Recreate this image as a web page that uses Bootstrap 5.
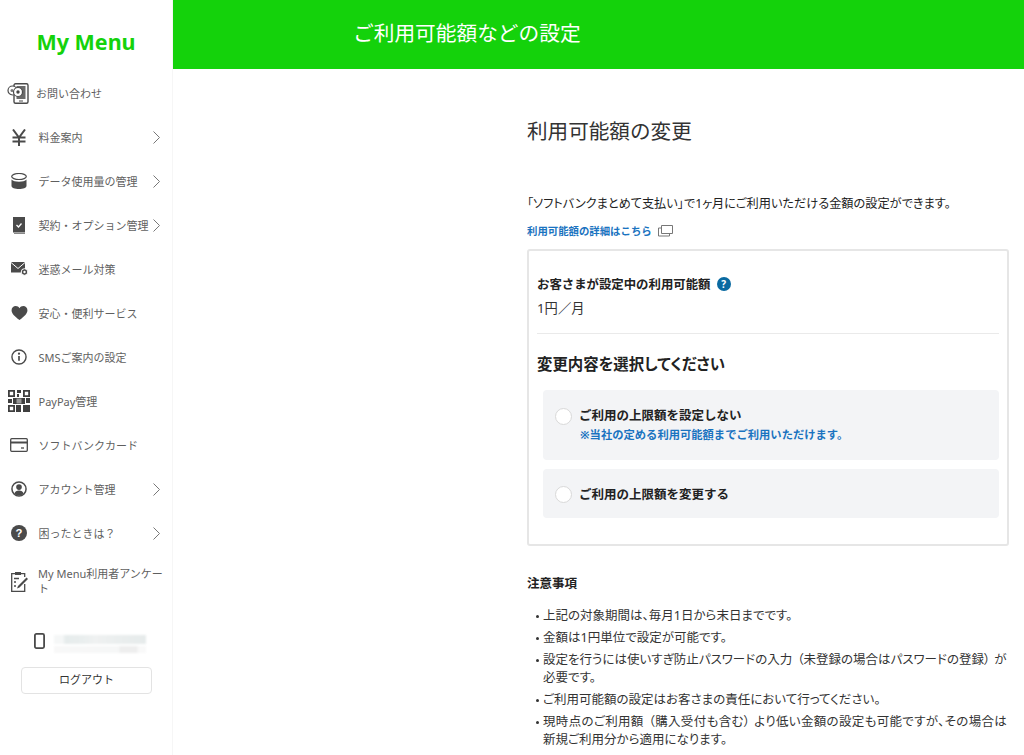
<!DOCTYPE html>
<html lang="ja">
<head>
  <meta charset="UTF-8" />
  <meta name="viewport" content="width=device-width, initial-scale=1" />
  <title>ご利用可能額などの設定</title>
  <link href="https://cdn.jsdelivr.net/npm/bootstrap@5.3.3/dist/css/bootstrap.min.css" rel="stylesheet" />
  <style>
    html, body {
      height: 755px;
      overflow: hidden;
    }

    body {
      font-family: "Noto Sans", "Noto Sans CJK JP", sans-serif;
      color: #222;
      background: #fff;
    }

    .page-wrap {
      height: 755px;
    }

    .side-menu {
      width: 173px;
      flex: 0 0 173px;
      border-right: 1px solid #f6f6f6;
      background: #fff;
    }

    .side-title {
      height: 71px;
      padding-top: 26px;
      font-weight: 700;
      font-size: 21.5px;
      line-height: 32px;
      color: #14d20b;
      text-align: center;
    }

    .menu-row {
      height: 44px;
      color: #5f5f5f;
      font-size: 11px;
      line-height: 15px;
      text-decoration: none;
    }

    .menu-row.menu-tall {
      height: 52px;
    }

    .menu-icon {
      width: 38.5px;
      flex: 0 0 38.5px;
    }

    .menu-icon svg {
      display: block;
      margin: 0 auto;
    }

    .menu-first .menu-icon {
      width: 36px;
      flex-basis: 36px;
    }

    .menu-tall .menu-icon {
      width: 38px;
      flex-basis: 38px;
    }

    .menu-label {
      flex: 1 1 auto;
      white-space: nowrap;
    }

    .menu-label.menu-wrap {
      white-space: normal;
      padding-right: 6px;
    }

    .menu-arrow {
      flex: 0 0 auto;
      margin-right: 12px;
    }

    .phone-row {
      margin-top: 26px;
      height: 20px;
      padding-left: 34px;
    }

    .blur-num {
      margin: 2px 0 0 9px;
      width: 92px;
    }

    .blur-num span {
      display: block;
      filter: blur(1px);
    }

    .blur-a {
      height: 9px;
      background: linear-gradient(to right, #f5f7f7 0, #f5f7f7 10%, #e6ecec 12%, #e9eeee 30%, #eff1f1 45%, #eaeeee 70%, #e6ebeb 100%);
    }

    .blur-b {
      height: 7px;
      margin-top: 2px;
      background: linear-gradient(to right, #f8f8f8 0, #f6f7f7 70%, #eeeeee 72%, #eeeeee 90%, #f9f9f9 92%);
    }

    .logout-btn {
      display: block;
      width: 131px;
      height: 27px;
      margin: 14px 0 0 21px;
      padding: 0 0 2px;
      border: 1px solid #e3e3e3;
      border-radius: 4px;
      background: #fff;
      color: #333;
      font-size: 11px;
      line-height: 23px;
    }

    .main-area {
      flex: 1 1 auto;
      min-width: 0;
    }

    .top-band {
      height: 69px;
      padding-left: 180px;
      background: #14d20b;
      color: #fff;
      font-size: 20.7px;
      line-height: 66px;
    }

    .content-col {
      margin-left: 354px;
      width: 482px;
    }

    .page-head {
      margin: 47px 0 0;
      font-size: 20.6px;
      font-weight: 400;
      line-height: 30px;
      color: #333;
    }

    .lead-text {
      margin: 48px 0 0;
      font-size: 12.2px;
      line-height: 20px;
      color: #222;
      white-space: nowrap;
      font-feature-settings: "palt";
    }

    .detail-link {
      display: block;
      margin-top: 7px;
      height: 20px;
      font-size: 10.4px;
      font-weight: 700;
      line-height: 20px;
      color: #1a73c0;
      text-decoration: none;
    }

    .detail-link svg {
      vertical-align: -2px;
      margin-left: 6px;
    }

    .limit-box {
      margin-top: 8px;
      height: 297px;
      padding: 0 8px;
      border: 2px solid #e6e6e6;
      border-radius: 3px;
    }

    .now-title {
      margin: 24px 0 0;
      font-size: 12.4px;
      font-weight: 700;
      line-height: 20px;
      color: #222;
    }

    .help-dot {
      display: inline-block;
      width: 14px;
      height: 14px;
      margin-left: 3px;
      border-radius: 50%;
      background: #0a6aa1;
      color: #fff;
      font-size: 10px;
      font-weight: 700;
      line-height: 14px;
      text-align: center;
      vertical-align: 1px;
    }

    .now-value {
      margin: 3px 0 0;
      padding-bottom: 15px;
      border-bottom: 1px solid #eaeaea;
      font-size: 13.3px;
      line-height: 20px;
      color: #333;
    }

    .pick-title {
      margin: 18px 0 12px;
      font-size: 15.4px;
      font-weight: 700;
      line-height: 26px;
      color: #222;
      font-feature-settings: "palt";
    }

    .pick-row {
      margin-left: 6px;
      border-radius: 4px;
      background: #f3f4f6;
      padding-left: 12px;
    }

    .pick-a {
      height: 70px;
      padding-top: 17px;
    }

    .pick-b {
      height: 49px;
      margin-top: 9px;
      padding-top: 2px;
    }

    .radio-dot {
      flex: 0 0 17px;
      width: 17px;
      height: 17px;
      margin-right: 7px;
      border: 1px solid #d9d9d9;
      border-radius: 50%;
      background: #fff;
    }

    .pick-a .radio-dot {
      margin-top: 1px;
    }

    .pick-name {
      font-size: 12.5px;
      font-weight: 700;
      line-height: 18px;
      color: #222;
    }

    .pick-note {
      padding-left: 1px;
      font-size: 11.3px;
      font-weight: 700;
      line-height: 19px;
      color: #1a73c0;
    }

    .notes-head {
      margin: 28px 0 0;
      font-size: 12.5px;
      font-weight: 700;
      line-height: 20px;
      color: #222;
    }

    .notes-list {
      margin: 13px 0 0;
      padding: 0;
      list-style: none;
      font-size: 12.5px;
      line-height: 18px;
      color: #333;
      font-feature-settings: "palt";
    }

    .notes-list li {
      position: relative;
      margin-bottom: 4px;
      padding-left: 16px;
    }

    .notes-list li::before {
      content: "";
      position: absolute;
      left: 9px;
      top: 8px;
      width: 3px;
      height: 3px;
      border-radius: 50%;
      background: #333;
    }

    .open-br {
      margin-left: 5px;
    }

    .close-br {
      margin-right: 4px;
    }

    .notes-loose {
      letter-spacing: .32px;
    }
  </style>
</head>
<body>

  <div class="page-wrap d-flex">

    <!-- Sidebar -->
    <nav class="side-menu">
      <div class="side-title">My Menu</div>

      <a class="menu-row menu-first d-flex align-items-center" href="#">
        <span class="menu-icon"><svg width="22" height="21" viewBox="0 0 22 21"><rect x="7" y="0.700" width="14" height="19.600" rx="1.500" fill="#fff" stroke="#4a4a4a" stroke-width="1.400"/><rect x="9.500" y="3" width="9" height="13" fill="#6a6a6a"/><path d="M12 18h4" stroke="#4a4a4a"/><circle cx="5.500" cy="7.500" r="4.500" fill="#fff" stroke="#4a4a4a" stroke-width="1.200"/><circle cx="11" cy="9" r="4.500" fill="#fff" stroke="#4a4a4a" stroke-width="1.200"/><circle cx="5" cy="7.500" r="1.500" fill="#777"/><circle cx="11" cy="9" r="1.700" fill="#444"/></svg></span>
        <span class="menu-label">お問い合わせ</span>
      </a>
      <a class="menu-row d-flex align-items-center" href="#">
        <span class="menu-icon"><svg width="14" height="17" viewBox="0 0 14 17" fill="none" stroke="#4a4a4a" stroke-width="2"><path d="M1 .5l6 8 6-8M7 8.500V17M.5 8.500h13M.5 12.500h13"/></svg></span>
        <span class="menu-label">料金案内</span>
        <svg class="menu-arrow" width="7" height="13" viewBox="0 0 7 13" fill="none" stroke="#777"><path d="M.5.5l6 6-6 6"/></svg>
      </a>
      <a class="menu-row d-flex align-items-center" href="#">
        <span class="menu-icon"><svg width="16" height="16" viewBox="0 0 16 16"><ellipse cx="8" cy="3.500" rx="7.300" ry="3" fill="none" stroke="#4a4a4a" stroke-width="1.200"/><path d="M.5 6.500c1.500 1.600 4 2.200 7.500 2.200s6-.6 7.500-2.200V13c0 1.700-3.400 3-7.500 3S.5 14.700.5 13z" fill="#4a4a4a"/></svg></span>
        <span class="menu-label">データ使用量の管理</span>
        <svg class="menu-arrow" width="7" height="13" viewBox="0 0 7 13" fill="none" stroke="#777"><path d="M.5.5l6 6-6 6"/></svg>
      </a>
      <a class="menu-row d-flex align-items-center" href="#">
        <span class="menu-icon"><svg width="12" height="17" viewBox="0 0 12 17"><rect x="0" y="0" width="12" height="15.500" fill="#4a4a4a"/><path d="M1 16.500h11" stroke="#888"/><path d="M3.500 8l2 2 3-3.500" fill="none" stroke="#fff" stroke-width="1.300"/></svg></span>
        <span class="menu-label">契約・オプション管理</span>
        <svg class="menu-arrow" width="7" height="13" viewBox="0 0 7 13" fill="none" stroke="#777"><path d="M.5.5l6 6-6 6"/></svg>
      </a>
      <a class="menu-row d-flex align-items-center" href="#">
        <span class="menu-icon"><svg width="17" height="14" viewBox="0 0 17 14"><path d="M0 0h14v10.500H0z" fill="#4a4a4a"/><path d="M0 .5l7 6 7-6" fill="none" stroke="#fff"/><circle cx="13.500" cy="10" r="3.300" fill="#4a4a4a" stroke="#fff"/><circle cx="13.500" cy="10" r="1.200" fill="#fff"/></svg></span>
        <span class="menu-label">迷惑メール対策</span>
      </a>
      <a class="menu-row d-flex align-items-center" href="#">
        <span class="menu-icon"><svg width="17" height="14" viewBox="0 0 17 15"><path d="M8.500 15C3 10.800 0 8 0 4.500 0 2 2 0 4.500 0c1.700 0 3.200.9 4 2.300C9.300.9 10.800 0 12.500 0 15 0 17 2 17 4.500 17 8 14 10.800 8.500 15z" fill="#4a4a4a"/></svg></span>
        <span class="menu-label">安心・便利サービス</span>
      </a>
      <a class="menu-row d-flex align-items-center" href="#">
        <span class="menu-icon"><svg width="16" height="16" viewBox="0 0 17 17"><circle cx="8.500" cy="8.500" r="7.500" fill="none" stroke="#4a4a4a" stroke-width="1.500"/><circle cx="8.500" cy="5" r="1.200" fill="#4a4a4a"/><path d="M8.500 7.500v5" stroke="#4a4a4a" stroke-width="1.800"/></svg></span>
        <span class="menu-label">SMSご案内の設定</span>
      </a>
      <a class="menu-row d-flex align-items-center" href="#">
        <span class="menu-icon"><svg width="22" height="22" viewBox="0 0 22 22" fill="#3f3f3f"><path fill-rule="evenodd" d="M0 0h7v7H0zM1.800 1.800v3.400h3.400V1.800zM15 0h7v7h-7zM16.800 1.800v3.400h3.400V1.800zM0 15h7v7H0zM1.800 16.800v3.400h3.400v-3.400z"/><path d="M9 0h4v3H9zM9 4h2v3H9zM0 9h4v4H0zM5 8h12v6H5zM18 8h4v5h-4zM8 15h5v7H8zM15 15h7v7h-7z"/><path d="M8.500 8.500h5v5h-5z" fill="#999"/></svg></span>
        <span class="menu-label">PayPay管理</span>
      </a>
      <a class="menu-row d-flex align-items-center" href="#">
        <span class="menu-icon"><svg width="18" height="14" viewBox="0 0 18 14" fill="none" stroke="#4a4a4a" stroke-width="1.300"><rect x=".7" y=".7" width="16.600" height="12.600" rx="1"/><path d="M.7 4.500h16.600" stroke-width="2"/><path d="M11 10h3"/></svg></span>
        <span class="menu-label">ソフトバンクカード</span>
      </a>
      <a class="menu-row d-flex align-items-center" href="#">
        <span class="menu-icon"><svg width="16" height="16" viewBox="0 0 17 17"><circle cx="8.500" cy="8.500" r="7.500" fill="#fff" stroke="#4a4a4a" stroke-width="1.600"/><circle cx="8.500" cy="6.500" r="3" fill="#4a4a4a"/><path d="M3.500 13.500c.8-2.500 2.500-3.500 5-3.500s4.200 1 5 3.500c-1.300 1.200-3 1.800-5 1.800s-3.700-.6-5-1.800z" fill="#4a4a4a"/></svg></span>
        <span class="menu-label">アカウント管理</span>
        <svg class="menu-arrow" width="7" height="13" viewBox="0 0 7 13" fill="none" stroke="#777"><path d="M.5.5l6 6-6 6"/></svg>
      </a>
      <a class="menu-row d-flex align-items-center" href="#">
        <span class="menu-icon"><svg width="16" height="16" viewBox="0 0 17 17"><circle cx="8.500" cy="8.500" r="8.500" fill="#4a4a4a"/><text x="8.500" y="13" text-anchor="middle" font-size="12" font-weight="700" font-family="Liberation Sans" fill="#fff">?</text></svg></span>
        <span class="menu-label">困ったときは？</span>
        <svg class="menu-arrow" width="7" height="13" viewBox="0 0 7 13" fill="none" stroke="#777"><path d="M.5.5l6 6-6 6"/></svg>
      </a>
      <a class="menu-row menu-tall d-flex align-items-center" href="#">
        <span class="menu-icon"><svg width="17" height="21" viewBox="0 0 17 21" fill="none" stroke="#4a4a4a" stroke-width="1.300"><path d="M4 2.700H.7v17.600h13V13M10 2.700h3.700V6"/><path d="M4 1h6v3H4z" fill="#4a4a4a" stroke="none"/><path d="M3 7.500h5M3 11h2M3 15h2"/><path d="M7 15l8.500-8.500 1.500 1.500-8.500 8.500-2.500 1z" fill="#4a4a4a" stroke="none"/></svg></span>
        <span class="menu-label menu-wrap">My Menu利用者アンケート</span>
      </a>

      <div class="phone-row d-flex align-items-start">
        <svg width="11" height="16" viewBox="0 0 11 16" fill="none" stroke="#4a4a4a" stroke-width="1.800"><rect x=".9" y=".9" width="9.200" height="14.200" rx="1.500"/></svg>
        <div class="blur-num"><span class="blur-a"></span><span class="blur-b"></span></div>
      </div>
      <button type="button" class="logout-btn">ログアウト</button>
    </nav>

    <!-- Main -->
    <div class="main-area">
      <header class="top-band">ご利用可能額などの設定</header>
      <main class="content-col">
        <h1 class="page-head">利用可能額の変更</h1>
        <p class="lead-text">「ソフトバンクまとめて支払い」で1ヶ月にご利用いただける金額の設定ができます。</p>
        <a class="detail-link" href="#">利用可能額の詳細はこちら<svg width="15" height="12" viewBox="0 0 15 12" fill="none" stroke="#777"><path d="M3.500 .5h11v8h-11z"/><path d="M3.500 3H.5v8h11V8.500"/></svg></a>

        <section class="limit-box">
          <p class="now-title">お客さまが設定中の利用可能額 <span class="help-dot">?</span></p>
          <p class="now-value">1円／月</p>
          <h2 class="pick-title">変更内容を選択してください</h2>

          <div class="pick-row pick-a d-flex">
            <span class="radio-dot"></span>
            <div>
              <div class="pick-name">ご利用の上限額を設定しない</div>
              <div class="pick-note">※当社の定める利用可能額までご利用いただけます。</div>
            </div>
          </div>
          <div class="pick-row pick-b d-flex align-items-center">
            <span class="radio-dot"></span>
            <div class="pick-name">ご利用の上限額を変更する</div>
          </div>
        </section>

        <h3 class="notes-head">注意事項</h3>
        <ul class="notes-list">
          <li>上記の対象期間は、毎月1日から末日までです。</li>
          <li>金額は1円単位で設定が可能です。</li>
          <li>設定を行うには使いすぎ防止パスワードの入力<span class="open-br">（</span>未登録の場合はパスワードの登録<span class="close-br">）</span>が必要です。</li>
          <li>ご利用可能額の設定はお客さまの責任において行ってください。</li>
          <li><span class="notes-loose">現時点のご利用額<span class="open-br">（</span>購入受付も含む<span class="close-br">）</span>より低い金額の設定も可能ですが、その場合は</span><br>新規ご利用分から適用になります。</li>
        </ul>
      </main>
    </div>
  </div>

<script src="https://cdn.jsdelivr.net/npm/bootstrap@5.3.3/dist/js/bootstrap.bundle.min.js"></script>
</body>
</html>
